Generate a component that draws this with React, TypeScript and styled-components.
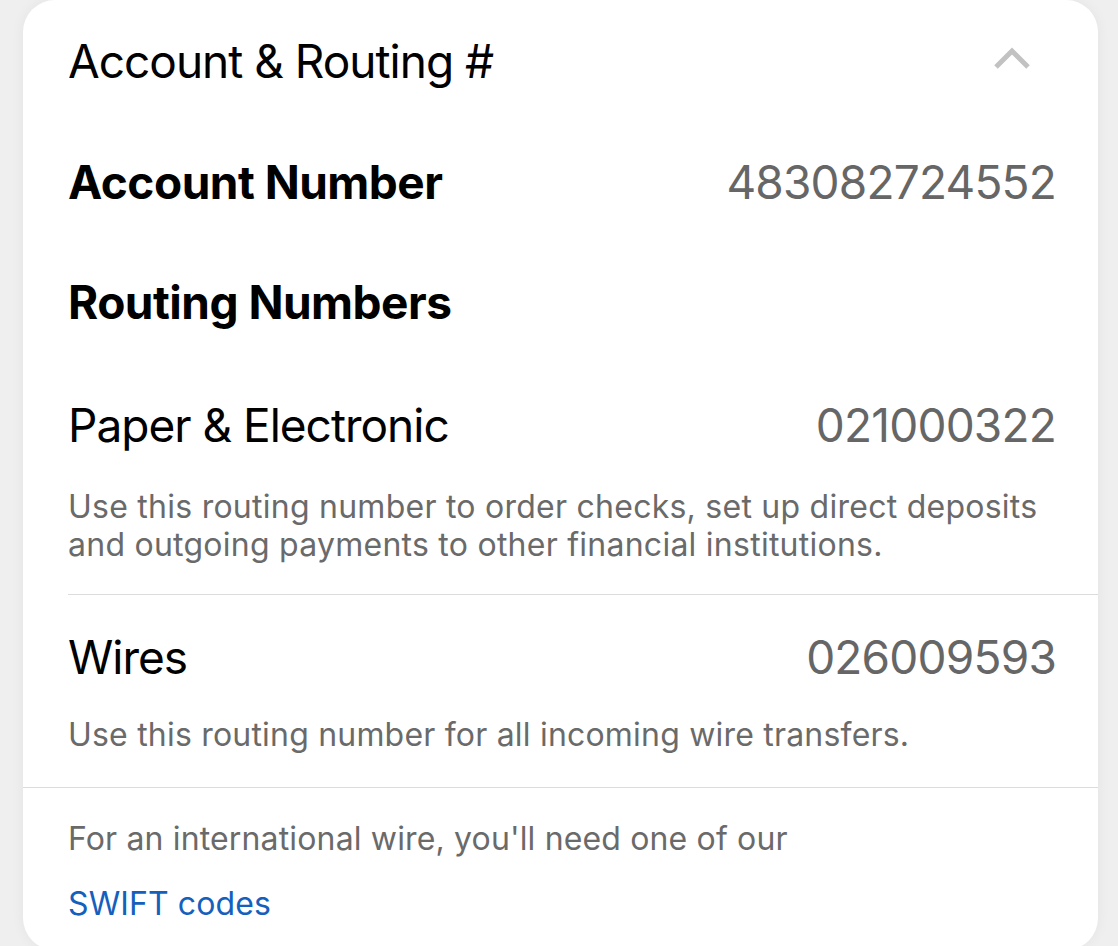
import styled, { createGlobalStyle } from "styled-components";

const GlobalStyle = createGlobalStyle`
  html, body {
    margin: 0;
    padding: 0;
    background: #efefef;
    overflow: hidden;
  }
  body {
    font-family: Inter, "Noto Sans", sans-serif;
    -webkit-font-smoothing: antialiased;
  }
`

const Page = styled.div`
  width: 1118px;
  height: 946px;
  padding: 0 20px 0 23px;
  box-sizing: border-box;
`

const Card = styled.div`
  background: #fff;
  height: 950px;
  border-radius: 32px;
  box-shadow: 0 0 14px rgba(0, 0, 0, 0.05);
  display: flex;
  flex-direction: column;
`

const Header = styled.div`
  height: 122px;
  padding: 0 44px 0 45px;
  display: flex;
  align-items: center;
  justify-content: space-between;
  box-sizing: border-box;
`

const Title = styled.h1`
  margin: 0;
  font-size: 46px;
  font-weight: 400;
  color: #000;
  letter-spacing: -1px;
`

const Chevron = styled.svg`
  width: 40px;
  height: 24px;
  margin-right: 22px;
  margin-bottom: 4px;
`

const Row = styled.div<{ $height: number }>`
  height: ${p => p.$height}px;
  padding: 0 44px 0 45px;
  display: flex;
  align-items: center;
  justify-content: space-between;
  box-sizing: border-box;
`

const Label = styled.div<{ $bold?: boolean }>`
  font-size: 46px;
  font-weight: ${p => p.$bold ? 700 : 400};
  color: #000;
  letter-spacing: ${p => p.$bold ? "-0.5px" : "-1px"};
`

const Value = styled.div`
  font-size: 46px;
  font-weight: 400;
  color: #666;
  letter-spacing: -0.8px;
  margin-right: -2px;
`

const Note = styled.p<{ $gap?: number; $spacing?: number }>`
  margin: ${p => p.$gap ?? 0}px 0 0;
  padding: 0 44px 0 45px;
  font-size: 32px;
  line-height: 38px;
  color: #6a6a6a;
  letter-spacing: ${p => p.$spacing ?? 0.25}px;
`

const Divider = styled.hr<{ $inset?: boolean }>`
  margin: 0 0 0 ${p => p.$inset ? 45 : 0}px;
  border: none;
  border-top: 1.5px solid #dcdcdc;
`

const Section = styled.div<{ $top: number; $bottom: number }>`
  padding-top: ${p => p.$top}px;
  padding-bottom: ${p => p.$bottom}px;
`

const Link = styled.a`
  display: block;
  margin-top: 27px;
  padding: 0 44px 0 45px;
  font-size: 32px;
  line-height: 38px;
  color: #1560bd;
  text-decoration: none;
  letter-spacing: 0.1px;
`

export default function App() {
  return (
    <>
      <GlobalStyle />
      <Page>
        <Card>
          <Header>
            <Title>Account &amp; Routing #</Title>
            <Chevron viewBox="0 0 40 24">
              <polyline points="4,20 20,4 36,20" fill="none" stroke="#c2c2c2" strokeWidth="5" />
            </Chevron>
          </Header>
          <Row $height={120}>
            <Label $bold>Account Number</Label>
            <Value>483082724552</Value>
          </Row>
          <Row $height={120}>
            <Label $bold>Routing Numbers</Label>
          </Row>
          <Section $top={5} $bottom={30}>
            <Row $height={116}>
              <Label>Paper &amp; Electronic</Label>
              <Value>021000322</Value>
            </Row>
            <Note $gap={5}>
              Use this routing number to order checks, set up direct deposits
              and outgoing payments to other financial institutions.
            </Note>
          </Section>
          <Divider $inset />
          <Section $top={4} $bottom={33}>
            <Row $height={116}>
              <Label>Wires</Label>
              <Value>026009593</Value>
            </Row>
            <Note $gap={1} $spacing={0.2}>Use this routing number for all incoming wire transfers.</Note>
          </Section>
          <Divider />
          <Section $top={32} $bottom={0}>
            <Note $spacing={0.15}>For an international wire, you'll need one of our</Note>
            <Link href="#">SWIFT codes</Link>
          </Section>
        </Card>
      </Page>
    </>
  )
}
